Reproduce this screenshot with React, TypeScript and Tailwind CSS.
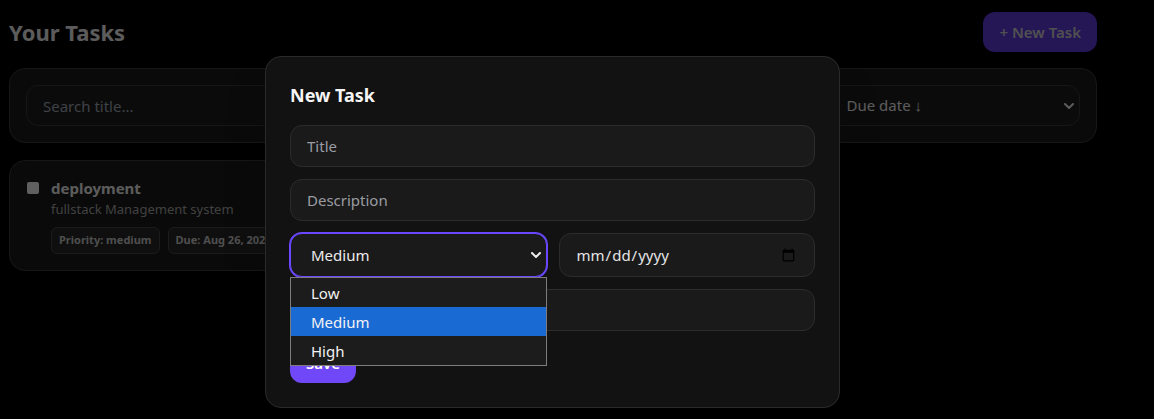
import React from 'react';

const Chevron: React.FC<{ className?: string }> = ({ className }) => (
  <svg
    viewBox="0 0 10 6"
    className={className}
    fill="none"
    stroke="currentColor"
    strokeWidth={2}
    strokeLinecap="round"
    strokeLinejoin="round"
  >
    <path d="M1 1l4 4 4-4" />
  </svg>
);

const priorities = ['Low', 'Medium', 'High'];

/**
 * Task list page with the "New Task" modal open and the priority menu dropped down
 */
export default function App() {
  return (
    <div className="relative h-[419px] w-full overflow-hidden bg-black font-['Noto_Sans',sans-serif]">
      {/* page behind the modal */}
      <div className="ml-[9px] w-[1088px] pt-3">
        <div className="flex h-10 items-center justify-between">
          <h1 className="text-[22px] font-bold text-[#e5e5e5]">Your Tasks</h1>
          <button
            type="button"
            className="h-10 rounded-xl bg-[#5d3ad8] px-4 text-[15px] font-semibold text-[#c8c8c8]"
          >
            + New Task
          </button>
        </div>

        <div className="mt-4 grid grid-cols-4 gap-3 rounded-2xl border border-[#3a3a3a] bg-[#191919] p-4">
          <input
            placeholder="Search title..."
            className="col-span-2 h-[41px] rounded-xl border border-[#383838] bg-[#1d1d1d] px-4 text-[15px] text-[#e5e5e5] placeholder:text-[#9ca3af] outline-none"
          />
          <div className="flex h-[41px] items-center justify-between rounded-xl border border-[#383838] bg-[#1d1d1d] px-4 text-[15px] text-[#e5e5e5]">
            All status
            <Chevron className="h-[6px] w-[10px]" />
          </div>
          <div className="flex h-[41px] items-center justify-between rounded-xl border border-[#383838] bg-[#1d1d1d] pl-5 pr-[5px] text-[15px] text-[#e5e5e5]">
            Due date ↓
            <Chevron className="h-[6px] w-[10px]" />
          </div>
        </div>

        <div className="mt-[17px] grid grid-cols-2 gap-4">
          <div className="flex items-start gap-3 rounded-2xl border border-[#3a3a3a] bg-[#191919] p-4">
            <div className="mt-[5px] ml-[1px] h-3 w-3 shrink-0 rounded-[2px] bg-[#f0f0f0]" />
            <div className="flex-1">
              <div className="text-[15px] font-bold leading-[22px] text-[#e5e5e5]">deployment</div>
              <div className="text-[13px] leading-5 text-[#a3a3a3]">fullstack Management system</div>
              <div className="mt-2 flex gap-2">
                <span className="rounded-md border border-[#454545] bg-[#262626] px-[7px] py-[4px] text-[11px] font-bold text-[#c4c4c4]">
                  Priority: medium
                </span>
                <span className="rounded-md border border-[#454545] bg-[#262626] px-[7px] py-[4px] text-[11px] font-bold text-[#c4c4c4]">
                  Due: Aug 26, 2025
                </span>
              </div>
            </div>
            <button
              type="button"
              className="rounded-lg bg-[#b91c1c] px-3 py-1 text-[13px] font-semibold text-white"
            >
              Delete
            </button>
          </div>
        </div>
      </div>

      {/* backdrop + modal */}
      <div className="absolute inset-0 bg-black/60 pl-[265px] pt-[56px]">
        <div className="w-[575px] rounded-2xl border border-[#2a2a2a] bg-[#121212] p-6 shadow-2xl">
          <h2 className="text-lg font-bold leading-7 text-[#f5f5f5]">New Task</h2>

          <div className="mt-4 flex flex-col gap-3">
            <input
              placeholder="Title"
              className="h-[42px] rounded-xl border border-[#2c2c2c] bg-[#1a1a1a] px-4 text-[15px] text-[#e5e5e5] placeholder:text-[#9a9ca3] outline-none"
            />
            <input
              placeholder="Description"
              className="h-[42px] rounded-xl border border-[#2c2c2c] bg-[#1a1a1a] px-4 text-[15px] text-[#e5e5e5] placeholder:text-[#9a9ca3] outline-none"
            />

            <div className="relative grid h-[44px] grid-cols-2 gap-3">
              <div className="flex items-center justify-between rounded-xl border border-[#6b48ff] bg-[#1a1a1a] pl-5 pr-[5px] text-[15px] text-[#ececec] ring-1 ring-[#6b48ff]">
                Medium
                <Chevron className="h-[6px] w-[10px]" />
              </div>
              <input
                type="date"
                className="rounded-xl border border-[#2c2c2c] bg-[#1a1a1a] px-4 text-[15px] text-[#e5e5e5] outline-none"
              />

              {/* open priority menu */}
              <div className="absolute left-0 top-[44px] z-10 w-[257px] border border-[#7d7d7d] bg-[#1c1c1c] text-[15px] text-[#f2f2f2]">
                {priorities.map((p) => (
                  <div
                    key={p}
                    className={`flex h-[29px] items-center pl-5 pt-[1px] ${p === 'Medium' ? 'bg-[#1a6ad4]' : ''}`}
                  >
                    {p}
                  </div>
                ))}
              </div>
            </div>

            <input
              placeholder="Tags (comma separated)"
              className="h-[42px] rounded-xl border border-[#2c2c2c] bg-[#1a1a1a] px-4 text-[15px] text-[#e5e5e5] placeholder:text-[#9a9ca3] outline-none"
            />
          </div>

          <button
            type="button"
            className="mt-3 h-10 rounded-xl bg-[#7048f7] px-4 text-[15px] font-semibold text-white"
          >
            Save
          </button>
        </div>
      </div>
    </div>
  );
}
